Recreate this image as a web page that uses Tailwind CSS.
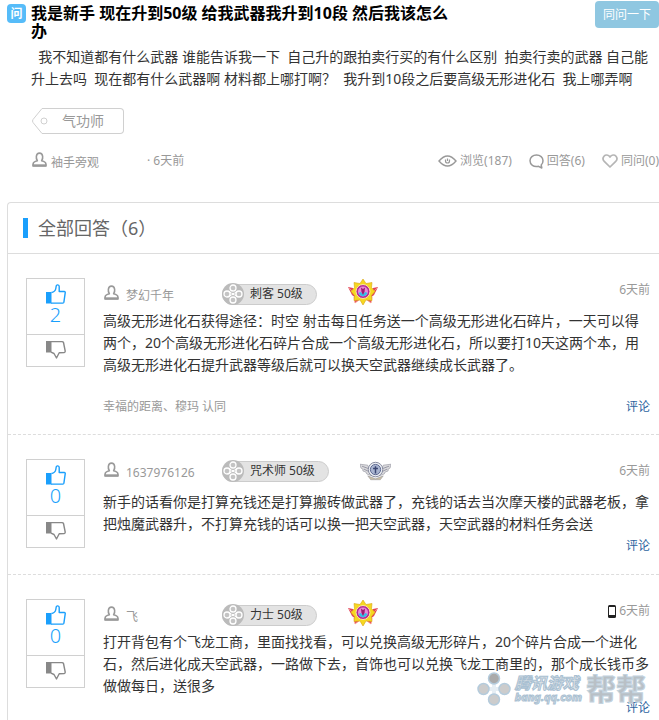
<!DOCTYPE html>
<html lang="zh-CN">
<head>
    <meta charset="UTF-8">
    <meta name="viewport" content="width=device-width, initial-scale=1">
    <title>全部回答</title>
    <script src="https://cdn.jsdelivr.net/npm/@tailwindcss/browser@4"></script>
</head>
<body class="flex min-h-screen flex-col overflow-x-hidden bg-white font-['Noto_Sans','Noto_Sans_CJK_SC',sans-serif] text-sm text-[#333]">

    <!--图标-->
    <svg class="hidden">
        <symbol id="icon-user" viewBox="0 0 14 14">
            <path d="M5 8.200C3.600 6.500 3.300 1 7 1s3.400 5.500 2 7.200c2 .5 4 1.200 4 3.200V13H1v-1.600c0-2 2-2.700 4-3.200z" fill="none" stroke="#999" stroke-width="1.500" stroke-linejoin="round"/>
            <path d="M.5 12.500h13" stroke="#999" stroke-width="2"/>
        </symbol>
        <symbol id="icon-up" viewBox="0 0 20 20">
            <path d="M0 8h5.500v11.500H0z" fill="#1a9ffc"/>
            <path d="M5.500 8.500C8 8 9.500 6.500 9.800 4.500L10.200 2C10.500.4 13.200.4 13.200 2.600V7.500h5c.8 0 1.200.6 1 1.400l-1.300 9.300c-.1.600-.5.900-1.100.9H5" fill="none" stroke="#1a9ffc" stroke-width="1.400" stroke-linejoin="round"/>
        </symbol>
        <symbol id="icon-down" viewBox="0 0 20 20">
            <path d="M0 1h5.500v11.500H0z" fill="#888"/>
            <path d="M5 1.600h11c.9 0 1.300.3 1.500.9L19.200 11c.1.800-.3 1.400-1 1.500l-5 .3L10.500 18 8 13.500 5 12.200" fill="none" stroke="#888" stroke-width="1.400" stroke-linejoin="round"/>
        </symbol>
        <symbol id="icon-job" viewBox="0 0 22 22">
            <circle cx="11" cy="11" r="11" fill="#bbb"/>
            <g fill="#c4c4c4" stroke="#fff" stroke-width="1.300">
                <circle cx="11" cy="5" r="3"/><circle cx="5" cy="11" r="3"/>
                <circle cx="17" cy="11" r="3"/><circle cx="11" cy="17" r="3"/>
            </g>
            <path d="M6.500 8l3 2.500M15.500 8l-3 2.500M6.500 14l3-2.500M15.500 14l-3-2.500" stroke="#fff" stroke-width="1.200"/>
            <circle cx="11" cy="11" r="1.200" fill="#fff"/>
        </symbol>
        <symbol id="medal-gold" viewBox="0 0 30 26">
            <path d="M0 8l5 1 4 6-1 4-4-3zM30 8l-5 1-4 6 1 4 4-3z" fill="#e2405a"/>
            <path d="M1 9l4 4M29 9l-4 4M6 18l1 6 4-3zM24 18l-1 6-4-3z" fill="#e2405a" stroke="#f7a08c" stroke-width=".8"/>
            <path d="M15 0l3 4.500 6-1-.5 5 3.500 4-3.500 4 .5 5-6-.5-3 5-3-5-6 .5.500-5-3.500-4 3.500-4-.5-5 6 1z" fill="#f6d820" stroke="#d9a318" stroke-width=".6"/>
            <circle cx="15" cy="12.500" r="7" fill="#b52a98" stroke="#fbe9a0" stroke-width="1"/>
            <circle cx="15" cy="12.500" r="5" fill="#e58bd8"/>
            <path d="M10.500 14a4.800 4.800 0 0 0 9 0l-2-1-2.500 2-2.500-2z" fill="#35bfe8"/>
            <path d="M13 8.500l2 1.500 2-1.500-.5 4.500-1.500 3-1.500-3z" fill="#a01870"/>
        </symbol>
        <symbol id="medal-silver" viewBox="0 0 32 20">
            <path d="M0 3l8 1 4 11-5-2-1-2-3-1 0-2-2-1zM32 3l-8 1-4 11 5-2 1-2 3-1 0-2 2-1z" fill="#dcdcde" stroke="#9a9aa4" stroke-width=".7"/>
            <path d="M2 5l8 3M4 8l6 3M30 5l-8 3M28 8l-6 3" stroke="#77778a" stroke-width=".7"/>
            <path d="M8 15l8 3 8-3-3 4H11z" fill="#c9bfa4" stroke="#8d8d98" stroke-width=".5"/>
            <circle cx="16" cy="8.500" r="7.500" fill="#eceff4" stroke="#85899e" stroke-width="1"/>
            <circle cx="16" cy="8.500" r="5.300" fill="#a9b4d0" stroke="#5c6790" stroke-width="1"/>
            <path d="M16 5v7.500M13.500 7.500h5" stroke="#3a4672" stroke-width="1.500"/>
        </symbol>
    </svg>

    <!--问题-->
    <section class="pl-[7px]">
        <div class="flex items-start pt-px">
            <span class="mt-[3px] flex size-[19px] shrink-0 items-center justify-center rounded-sm bg-[#56bcf9] text-xs font-bold text-white">问</span>
            <h1 class="ml-[5px] mt-[3px] w-[430px] text-base/[18px] font-bold text-black">我是新手 现在升到50级 给我武器我升到10段 然后我该怎么办</h1>
            <button type="button" class="ml-auto h-[27px] shrink-0 rounded-sm bg-[#8fc7e1] px-2 text-xs text-white">同问一下</button>
        </div>

        <p class="mt-1.5 pl-6 pr-1 leading-[22px]">&nbsp; 我不知道都有什么武器 谁能告诉我一下&nbsp; 自己升的跟拍卖行买的有什么区别&nbsp; 拍卖行卖的武器 自己能升上去吗&nbsp; 现在都有什么武器啊 材料都上哪打啊？&nbsp; 我升到10段之后要高级无形进化石&nbsp; 我上哪弄啊</p>

        <!--标签-->
        <a href="#" class="ml-[25px] mt-[18px] flex w-fit items-center text-[#999]">
            <svg class="h-[26px] w-5" viewBox="0 0 20 26" fill="none" stroke="#d0d0d0">
                <path d="M20 .5H10L1 11.500q-1 1.500 0 3L10 25.500h10"/>
                <circle cx="12" cy="13" r="3"/>
            </svg>
            <span class="h-[26px] rounded-r-sm border border-l-0 border-[#d0d0d0] pl-[10px] pr-[19px] leading-6">气功师</span>
        </a>

        <!--提问者和统计-->
        <div class="mt-4 flex h-[22px] items-center whitespace-nowrap pl-[25px] text-xs text-[#999]">
            <a href="#" class="flex h-5 w-[115px] items-start gap-1 leading-4">
                <svg class="mt-px size-[15px]"><use href="#icon-user"/></svg><span class="mt-1">袖手旁观</span>
            </a>
            <span>· 6天前</span>
            <div class="ml-auto flex gap-[17px]">
                <span class="flex items-center gap-[3px]">
                    <svg class="h-3 w-[19px]" viewBox="0 0 19 12" fill="none" stroke="#999" stroke-width="1.400">
                        <path d="M1 6q8.500-10 17 0-8.500 10-17 0z"/>
                        <path d="M7.500 4.500v1.500a2 2 0 0 0 4 0V4.500M9.500 3.500V6" stroke-width="1.200"/>
                    </svg>浏览(187)
                </span>
                <span class="flex items-center gap-[3px]">
                    <svg class="size-[15px]" viewBox="0 0 15 15" fill="none" stroke="#999" stroke-width="1.500">
                        <path d="M9.500 12.300C4.500 13.500 1 10.500 1 6.800 1 3.500 3.800 1 7.500 1S14 3.500 14 6.800c0 2-1 3.500-1.800 4.200l.6 3z" stroke-linejoin="round"/>
                    </svg>回答(6)
                </span>
                <span class="flex items-center gap-[3px]">
                    <svg class="h-[14px] w-4" viewBox="0 0 16 14" fill="none" stroke="#b5b5b5" stroke-width="1.700">
                        <path d="M8 3C6.500.5 3.500.5 2 2.200c-1.500 1.800-1 4 .5 5.500L8 13l5.500-5.300c1.500-1.500 2-3.700.5-5.500C12.500.5 9.500.5 8 3z" stroke-linejoin="round"/>
                    </svg>同问(0)
                </span>
            </div>
        </div>
    </section>

    <!--全部回答-->
    <section class="relative ml-[7px] mt-[30px] grow rounded-tl-sm border-l border-t border-[#ddd]">
        <div class="flex h-[51px] items-center gap-[10px] border-b border-[#ddd] pl-[15px]">
            <span class="h-5 w-[5px] bg-[#1a9ffc]"></span>
            <h2 class="text-lg text-[#666]">全部回答（6）</h2>
        </div>

        <!--回答1-->
        <article class="flex items-start gap-[18px] border-b border-dashed border-[#ddd] pb-4 pl-[18px] pr-[9px] pt-6">
            <div class="w-[59px] shrink-0 border border-[#d0d0d0]">
                <button type="button" class="flex h-14 w-full flex-col items-center border-b border-[#d0d0d0] pt-[5px] text-xl/[22px] font-light text-[#1a9ffc]">
                    <svg class="size-5"><use href="#icon-up"/></svg>2
                </button>
                <button type="button" aria-label="踩" class="flex h-[31px] w-full justify-center pt-[5px]">
                    <svg class="size-5"><use href="#icon-down"/></svg>
                </button>
            </div>
            <div class="min-w-0 grow">
                <div class="flex h-8 items-center text-xs">
                    <a href="#" class="flex h-5 w-[119px] items-start gap-[7px] pl-px leading-4 text-[#999]">
                        <svg class="mt-px size-[15px]"><use href="#icon-user"/></svg><span class="mt-1">梦幻千年</span>
                    </a>
                    <span class="flex h-[21px] items-center gap-[6px] rounded-full border border-[#ccc] bg-[#e3e3e3] pr-[13px]">
                        <svg class="-my-px -ml-px size-[22px]"><use href="#icon-job"/></svg>刺客 50级
                    </span>
                    <svg class="mb-1 ml-[31px] h-[26px] w-[30px]"><use href="#medal-gold"/></svg>
                    <time class="mb-2 ml-auto text-[#999]">6天前</time>
                </div>
                <p class="leading-[22px]">高级无形进化石获得途径：时空 射击每日任务送一个高级无形进化石碎片，一天可以得两个，20个高级无形进化石碎片合成一个高级无形进化石，所以要打10天这两个本，用高级无形进化石提升武器等级后就可以换天空武器继续成长武器了。</p>
                <div class="mt-5 flex justify-between text-xs/[22px] text-[#999]">
                    <span>幸福的距离、穆玛 认同</span>
                    <a href="#" class="text-[#2d64a0]">评论</a>
                </div>
            </div>
        </article>

        <!--回答2-->
        <article class="flex items-start gap-[18px] border-b border-dashed border-[#ddd] pb-[17px] pl-[18px] pr-[9px] pt-6">
            <div class="w-[59px] shrink-0 border border-[#d0d0d0]">
                <button type="button" class="flex h-14 w-full flex-col items-center border-b border-[#d0d0d0] pt-[5px] text-xl/[22px] font-light text-[#1a9ffc]">
                    <svg class="size-5"><use href="#icon-up"/></svg>0
                </button>
                <button type="button" aria-label="踩" class="flex h-[31px] w-full justify-center pt-[5px]">
                    <svg class="size-5"><use href="#icon-down"/></svg>
                </button>
            </div>
            <div class="min-w-0 grow">
                <div class="flex h-8 items-center pb-2 text-xs">
                    <a href="#" class="flex h-5 w-[119px] items-start gap-[7px] pl-px leading-4 text-[#999]">
                        <svg class="mt-px size-[15px]"><use href="#icon-user"/></svg><span class="mt-1">1637976126</span>
                    </a>
                    <span class="flex h-[21px] items-center gap-[6px] rounded-full border border-[#ccc] bg-[#e3e3e3] pr-[13px]">
                        <svg class="-my-px -ml-px size-[22px]"><use href="#icon-job"/></svg>咒术师 50级
                    </span>
                    <svg class="ml-[31px] h-5 w-[31px]"><use href="#medal-silver"/></svg>
                    <time class="ml-auto text-[#999]">6天前</time>
                </div>
                <p class="leading-[22px]">新手的话看你是打算充钱还是打算搬砖做武器了，充钱的话去当次摩天楼的武器老板，拿把烛魔武器升，不打算充钱的话可以换一把天空武器，天空武器的材料任务会送</p>
                <div class="flex justify-end text-xs/[22px]">
                    <a href="#" class="text-[#2d64a0]">评论</a>
                </div>
            </div>
        </article>

        <!--回答3-->
        <article class="flex items-start gap-[18px] pl-[18px] pr-[9px] pt-6">
            <div class="w-[59px] shrink-0 border border-[#d0d0d0]">
                <button type="button" class="flex h-14 w-full flex-col items-center border-b border-[#d0d0d0] pt-[5px] text-xl/[22px] font-light text-[#1a9ffc]">
                    <svg class="size-5"><use href="#icon-up"/></svg>0
                </button>
                <button type="button" aria-label="踩" class="flex h-[31px] w-full justify-center pt-[5px]">
                    <svg class="size-5"><use href="#icon-down"/></svg>
                </button>
            </div>
            <div class="min-w-0 grow">
                <div class="flex h-8 items-center text-xs">
                    <a href="#" class="flex h-5 w-[119px] items-start gap-[7px] pl-px leading-4 text-[#999]">
                        <svg class="mt-px size-[15px]"><use href="#icon-user"/></svg><span class="mt-1">飞</span>
                    </a>
                    <span class="flex h-[21px] items-center gap-[6px] rounded-full border border-[#ccc] bg-[#e3e3e3] pr-[13px]">
                        <svg class="-my-px -ml-px size-[22px]"><use href="#icon-job"/></svg>力士 50级
                    </span>
                    <svg class="mb-1 ml-[31px] h-[26px] w-[30px]"><use href="#medal-gold"/></svg>
                    <time class="mb-2 ml-auto flex items-center gap-[3px] text-[#999]">
                        <svg class="h-[13px] w-2" viewBox="0 0 8 13">
                            <rect width="8" height="13" rx="1.500" fill="#222"/>
                            <path d="M1 2h6v8H1z" fill="#fff"/>
                        </svg>6天前
                    </time>
                </div>
                <p class="leading-[22px]">打开背包有个飞龙工商，里面找找看，可以兑换高级无形碎片，20个碎片合成一个进化石，然后进化成天空武器，一路做下去，首饰也可以兑换飞龙工商里的，那个成长钱币多做做每日，送很多</p>
                <div class="flex justify-end text-xs/[22px]">
                    <a href="#" class="text-[#2d64a0]">评论</a>
                </div>
            </div>
        </article>

        <!--水印-->
        <div class="pointer-events-none absolute bottom-[14px] right-[13px] flex items-center font-bold text-[#e3e6e8] [-webkit-text-stroke:1px_#a9c0d2]">
            <svg class="mr-1 size-[34px]" viewBox="0 0 34 34" fill="#ccc" stroke="#b4cbdc" stroke-width="1.500">
                <path d="M17 10v14M9 17h16" stroke="#e6eef4" stroke-width="4"/>
                <circle cx="17" cy="6.500" r="5.500" fill="#aaa"/>
                <circle cx="6.500" cy="17" r="5.500"/>
                <circle cx="27.500" cy="17" r="5.500"/>
                <circle cx="17" cy="27.500" r="5.500"/>
            </svg>
            <span class="flex flex-col italic">
                <span class="text-base/4">腾讯游戏</span>
                <span class="text-[11px]/3">bang.qq.com</span>
            </span>
            <span class="ml-1 text-3xl/8 text-[#b9c0c6] [-webkit-text-stroke:1px_#c3d3df]">帮帮</span>
        </div>
    </section>
</body>
</html>
